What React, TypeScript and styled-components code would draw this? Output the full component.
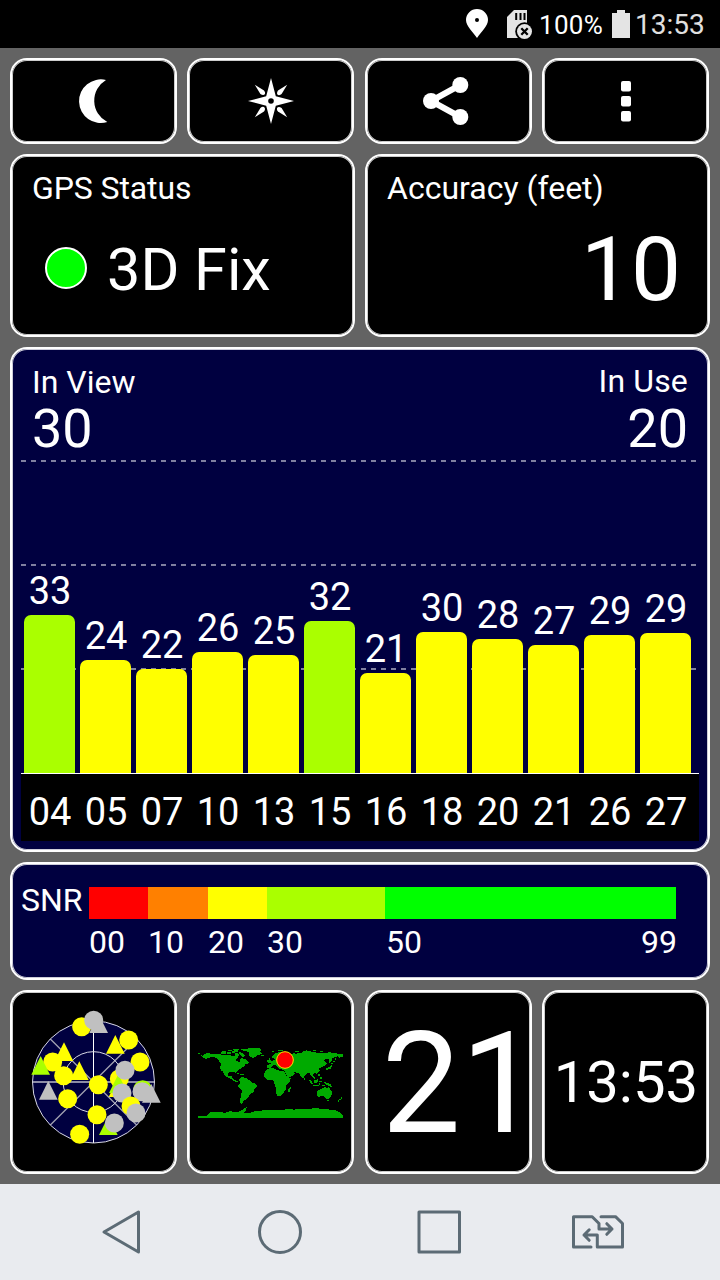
import React from "react";
import styled, { createGlobalStyle } from "styled-components";

const NAVY = "#000040";
const LIME = "#aaff00";
const YELLOW = "#ffff00";
const SILVER = "#c0c0c0";
const NAV_INK = "#5c6b75";

const GlobalStyle = createGlobalStyle`
  * { box-sizing: border-box; }
  body {
    margin: 0;
    background: #636363;
    font-family: Roboto, "Liberation Sans", sans-serif;
    color: #fff;
  }
  svg { display: block; }
`;

const Screen = styled.div`
  width: 720px;
  height: 1280px;
  display: flex;
  flex-direction: column;
  overflow: hidden;
`;

const StatusBar = styled.header`
  height: 48px;
  background: #000;
  display: flex;
  justify-content: flex-end;
  align-items: center;
  padding-right: 14px;
`;

const StatusText = styled.span<{ $size: number; $width: number; $color: string; $spacing?: number }>`
  font-size: ${(p) => p.$size}px;
  line-height: 32px;
  width: ${(p) => p.$width}px;
  color: ${(p) => p.$color};
  letter-spacing: ${(p) => p.$spacing ?? 0}px;
  padding-top: 2px;
  white-space: nowrap;
`;

const Dashboard = styled.main`
  height: 1136px;
  padding: 10px;
  display: flex;
  flex-direction: column;
  gap: 10px;
`;

const CardRow = styled.div<{ $height: number; $cell: number; $gap: number }>`
  display: grid;
  grid-auto-flow: column;
  grid-auto-columns: ${(p) => p.$cell}px;
  column-gap: ${(p) => p.$gap}px;
  height: ${(p) => p.$height}px;
`;

const Card = styled.section<{ $navy?: boolean }>`
  border: 2px solid #fff;
  border-radius: 17px;
  background: ${(p) => (p.$navy ? NAVY : "#000")};
  box-shadow: inset 0 0 0 1px rgba(255, 255, 255, 0.8);
`;

const InfoCard = styled(Card)`
  display: flex;
  flex-direction: column;
  padding: 16px 27px 0 20px;
`;

const Label = styled.div<{ $spacing?: number }>`
  font-size: 32px;
  line-height: 32px;
  letter-spacing: ${(p) => p.$spacing ?? 0}px;
  white-space: nowrap;
`;

const FixRow = styled.div`
  display: flex;
  align-items: center;
  margin-top: 36px;
  padding-left: 13px;
  gap: 20px;
  font-size: 59.4px;
  line-height: 60px;
`;

const FixLamp = styled.span`
  width: 42px;
  height: 42px;
  margin-bottom: 4px;
  border-radius: 50%;
  border: 2px solid #fff;
  background: #00ff00;
`;

const AccuracyValue = styled.div`
  font-size: 89px;
  line-height: 90px;
  margin-top: 21px;
  text-align: right;
`;

const ChartCard = styled(Card)`
  height: 505px;
  padding: 0 9px;
`;

const ChartHeader = styled.div`
  height: 111px;
  padding: 17px 10px 0 11px;
  display: flex;
  justify-content: space-between;
`;

const Count = styled.div<{ $right?: boolean }>`
  text-align: ${(p) => (p.$right ? "right" : "left")};
  margin-top: ${(p) => (p.$right ? -1 : 0)}px;
  margin-right: ${(p) => (p.$right ? 1 : 0)}px;
`;

const CountValue = styled.div<{ $offset: number }>`
  font-size: 54px;
  line-height: 54px;
  margin-top: ${(p) => p.$offset}px;
`;

const Plot = styled.div`
  display: grid;
  width: 678px;
  height: 314px;
  border-bottom: 1px solid #fff;
`;

const GridLines = styled.div`
  grid-area: 1 / 1;
  display: flex;
  flex-direction: column;
  gap: 102px;
`;

const GridLine = styled.div`
  width: 675px;
  height: 2px;
  background: repeating-linear-gradient(90deg, #8080a0 0 5px, transparent 5px 10px);
`;

const Bars = styled.div`
  grid-area: 1 / 1;
  display: flex;
  align-items: flex-end;
  gap: 5px;
  padding-left: 3px;
`;

const BarColumn = styled.div`
  width: 51px;
`;

const BarText = styled.div`
  padding-left: 1px;
  font-size: 38px;
  line-height: 38px;
  text-align: center;
`;

const Bar = styled.div<{ $height: number; $strong: boolean }>`
  height: ${(p) => p.$height}px;
  margin-top: 5px;
  border-radius: 7px 7px 0 0;
  background: ${(p) => (p.$strong ? LIME : YELLOW)};
`;

const Axis = styled.div`
  width: 678px;
  height: 67px;
  background: #000;
  display: flex;
  gap: 5px;
  padding: 19px 0 0 3px;
`;

const SnrCard = styled(Card)`
  height: 118px;
  padding: 23px 0 0 9px;
  display: flex;
`;

const SnrLabel = styled(Label)`
  width: 68px;
  margin-top: -3px;
`;

const SnrScale = styled.div`
  display: grid;
  grid-template-columns: 59px 60px 59px 118px 291px;
  grid-template-rows: 32px 32px;
  row-gap: 7px;
`;

const Segment = styled.div<{ $color: string }>`
  background: ${(p) => p.$color};
`;

const Tick = styled(Label)`
  display: flex;
  justify-content: space-between;
`;

const LastTick = styled(Tick)`
  margin: 0 -1px 0 1px;
`;

const FigureCard = styled(Card)<{ $size: number; $left: number; $top: number }>`
  display: flex;
  align-items: center;
  padding-left: ${(p) => p.$left}px;
  padding-top: ${(p) => p.$top}px;
  font-size: ${(p) => p.$size}px;
  line-height: 1.2;
  white-space: nowrap;
`;

const NavBar = styled.nav`
  height: 96px;
  background: #e9ebef;
`;

const StatusIcons = () => (
  <svg width="75" height="48" viewBox="464 0 75 48">
    <path fill="#fff" d="M477 9a11 11 0 0 0-11 11c0 6 7 12 11 18 4-6 11-12 11-18a11 11 0 0 0-11-11z" />
    <circle cx="477" cy="20" r="2" fill="#000" />
    <path fill="#e4e4e4" d="M514 10h13v28h-20V17z" />
    <path d="M516.2 13v7M520.5 13v7M524.5 13v7" stroke="#000" strokeWidth="2" />
    <circle cx="524.5" cy="31.5" r="9.3" fill="#000" />
    <circle cx="524.5" cy="31.5" r="7.5" fill="#e4e4e4" />
    <path d="M521.3 28.3l6.4 6.4M527.7 28.3l-6.4 6.4" stroke="#000" strokeWidth="2.3" />
  </svg>
);

const BatteryIcon = () => (
  <svg width="25" height="48" viewBox="610 0 25 48">
    <path fill="#e4e4e4" d="M612 13h5v-3h8v3h5v25h-18z" />
  </svg>
);

const MoonIcon = () => (
  <svg width="163" height="82" viewBox="12 60 163 82">
    <path fill="#fff" d="M106 80A21.8 21.8 0 1 0 107.3 122A24 24 0 0 1 106 80z" />
  </svg>
);

const CompassIcon = () => (
  <svg width="163" height="82" viewBox="189 60 163 82">
    <g transform="translate(271 101)" fill="#fff">
      <path d="M0-23L4.8-4.8L23 0L4.8 4.8L0 23L-4.8 4.8L-23 0L-4.8-4.8z" />
      {[0, 90, 180, 270].map((angle) => (
        <path key={angle} transform={`rotate(${angle})`} d="M-16.2-16.2L-7-10.6Q-5.4-9-6-7Q-7.6-5-10.6-7z" />
      ))}
      <circle r="2.8" fill="#000" />
    </g>
  </svg>
);

const ShareIcon = () => (
  <svg width="163" height="82" viewBox="367 60 163 82">
    <path d="M460.3 85L431 101L460.3 117" stroke="#fff" strokeWidth="6" fill="none" />
    <circle cx="460.3" cy="85" r="8" fill="#fff" />
    <circle cx="460.3" cy="117" r="8" fill="#fff" />
    <circle cx="431" cy="101" r="8" fill="#fff" />
  </svg>
);

const MoreIcon = () => (
  <svg width="163" height="82" viewBox="544 60 163 82">
    {[81, 96, 111].map((y) => (
      <rect key={y} x="621" y={y} width="10" height="10.5" rx="2" fill="#fff" />
    ))}
  </svg>
);

type Sat = ["c" | "t", number, number, string];

const SATELLITES: Sat[] = [
  ["c", 185, 80, YELLOW],
  ["t", 236, 43, SILVER],
  ["c", 221, 61, SILVER],
  ["c", 326, 120, YELLOW],
  ["t", 286, 105, YELLOW],
  ["c", 360, 186, YELLOW],
  ["c", 98, 186, YELLOW],
  ["t", 132, 127, YELLOW],
  ["t", 62, 168, LIME],
  ["t", 178, 184, YELLOW],
  ["c", 131, 227, YELLOW],
  ["t", 85, 243, SILVER],
  ["c", 143, 296, YELLOW],
  ["c", 298, 236, YELLOW],
  ["t", 294, 235, YELLOW],
  ["t", 295, 223, LIME],
  ["c", 235, 254, YELLOW],
  ["c", 231, 344, YELLOW],
  ["c", 179, 403, YELLOW],
  ["c", 315, 211, SILVER],
  ["c", 306, 279, SILVER],
  ["c", 368, 269, LIME],
  ["c", 366, 275, SILVER],
  ["t", 394, 252, SILVER],
  ["c", 333, 318, YELLOW],
  ["c", 348, 339, SILVER],
  ["t", 265, 349, LIME],
  ["c", 283, 369, SILVER],
];

const SkyView = () => (
  <svg width="163" height="180" viewBox="-24 -24 489 540">
    <circle cx="220.5" cy="246" r="183" fill={NAVY} />
    <g stroke="#a0a0b0" strokeWidth="4">
      <path d="M91 117L350 375M91 375L350 117" />
      <path d="M38 246H403" stroke="#8c8ca6" strokeWidth="6" />
      <path d="M220.5 63V429" stroke="#fff" strokeWidth="3" />
    </g>
    <g fill="none" stroke="#d8d8e4" strokeWidth="3">
      <circle cx="220.5" cy="246" r="183" />
      <circle cx="220.5" cy="246" r="91" />
    </g>
    {SATELLITES.map(([kind, x, y, color], i) =>
      kind === "c" ? (
        <circle key={i} cx={x} cy={y} r="28.5" fill={color} />
      ) : (
        <path key={i} d={`M${x} ${y}l28 56h-56z`} fill={color} />
      )
    )}
  </svg>
);

const LAND = [
  "M36 81L42 72 54 69 66 72 90 72 96 75 120 75 126 78 135 78 135 69 141 69 147 75 144 81 138 87 138 93 147 96 150 99 150 93 153 84 165 87 171 93 177 99 168 102 162 105 168 108 156 111 150 117 141 123 138 132 132 126 120 126 114 129 114 138 126 138 126 144 132 150 144 153 144 157 132 154 120 145 105 138 99 126 96 123 99 132 93 120 90 114 93 102 84 87 72 81 60 82 48 87z",
  "M24 69h7v4h-7zM33 75h4v4h-4zM93 66h15v5H93zM96 62h12v3H96zM114 60h12v3h-12zM129 56h18v4h-18zM111 66h12v7h-12zM126 64h9v6h-9zM147 66L156 68 165 78 159 81 150 75zM132 61h12v4h-12z",
  "M150 59L165 57 180 54 210 54 213 59 216 60 210 64 213 69 216 72 204 75 195 81 189 84 183 82 177 75 177 66 165 63z",
  "M213 75h10v4h-10zM141 129h7v3h-7zM150 132h13v4h-13z",
  "M147 147L156 141 168 144 177 150 183 156 198 162 201 168 192 177 192 186 183 189 177 198 171 204 165 210 159 213 159 219 153 222 150 213 153 198 156 183 147 174 144 165 150 159z",
  "M231 117L246 113 255 117 270 123 282 123 288 135 294 144 303 144 300 153 288 165 288 177 282 186 279 192 273 197 262 198 258 189 258 174 252 156 246 150 231 150 222 141 222 132z",
  "M294 177L303 171 300 186 294 186zM234 98L237 84 241 88 245 98zM231 90h4v6h-4z",
  "M231 114L231 105 243 102 240 97 252 90 258 87 252 86 246 84 246 78 258 69 270 66 285 69 300 72 312 70 318 72 324 69 333 70 336 66 348 61 357 63 372 67 399 69 432 69 450 72 459 72 459 80 447 84 444 78 438 81 426 84 426 93 417 99 417 87 408 87 402 92 411 99 408 105 396 111 387 114 390 123 381 131 372 129 369 135 375 144 372 147 363 138 360 130 351 129 345 135 339 147 333 141 330 132 321 129 309 124 315 132 306 138 295 144 288 132 285 123 276 118 270 117 261 111 255 105 249 106 243 114z",
  "M264 60h15v3h-15zM246 63h5v3h-5zM315 62h12v3h-12zM369 60h9v4h-9zM390 63h9v3h-9zM414 66h9v3h-9z",
  "M405 117L411 114 420 110 423 105 427 108 423 115 411 120zM423 99h7v4h-7zM429 93h5v4h-5zM435 84h4v6h-4z",
  "M355 147L363 152 371 162 366 163 360 156zM371 152L378 150 384 147 384 156 378 161 372 158zM369 165h18v3h-18zM387 153h9v4h-9zM387 159h4v5h-4zM384 132h5v6h-5zM389 142h7v6h-7zM402 156L411 158 423 163 426 171 411 166zM396 165h8v3h-8z",
  "M381 183L390 178 399 174 405 171 411 176 417 170 420 177 426 186 426 192 420 204 411 207 402 200 396 198 384 201 381 192zM412 210h6v3h-6zM453 201h4v6h-4zM447 207h5v4h-5zM443 211h4v4h-4zM342 145h3v5h-3z",
  "M24 264L24 258 48 258 57 252 60 247 75 246 108 248 120 244 144 246 156 240 162 234 171 231 168 240 162 249 177 249 198 243 231 240 270 240 297 237 312 239 330 236 360 238 372 234 399 237 435 240 447 246 459 258 459 264z",
];

const WorldMap = () => (
  <svg width="163" height="180" viewBox="-3 -114 489 540">
    <path d={LAND.join("")} fill="#00aa00" shapeRendering="crispEdges" />
    <circle cx="285" cy="90" r="25" fill="#ff0000" stroke="#ffe000" strokeWidth="3" />
  </svg>
);

const NavIcons = () => (
  <svg width="720" height="96" viewBox="0 1184 720 96" fill="none" stroke={NAV_INK} strokeWidth="3" strokeLinejoin="round" strokeLinecap="round">
    <path d="M104 1232L138.5 1212V1252z" />
    <circle cx="280" cy="1232" r="20.5" />
    <path d="M419 1212h40.5v40H419z" />
    <path d="M591 1247H573.5V1216.7H592.2L599 1223.5V1229H612M606.8 1223.7L612 1229L606.8 1234.3" />
    <path d="M601 1216.7H615.5L622.5 1223.5V1247H597.3V1235H584M589.2 1229.8L584 1235L589.2 1240.3" />
  </svg>
);

const BARS = [
  { id: "04", snr: 33, height: 158 },
  { id: "05", snr: 24, height: 113 },
  { id: "07", snr: 22, height: 104 },
  { id: "10", snr: 26, height: 121 },
  { id: "13", snr: 25, height: 118 },
  { id: "15", snr: 32, height: 152 },
  { id: "16", snr: 21, height: 100 },
  { id: "18", snr: 30, height: 141 },
  { id: "20", snr: 28, height: 134 },
  { id: "21", snr: 27, height: 128 },
  { id: "26", snr: 29, height: 138 },
  { id: "27", snr: 29, height: 140 },
];

export default function App() {
  return (
    <>
      <GlobalStyle />
      <Screen>
        <StatusBar>
          <StatusIcons />
          <StatusText $size={26} $width={71} $color="#fff" $spacing={0.3}>100%</StatusText>
          <BatteryIcon />
          <StatusText $size={28} $width={71} $color="#e0e0e0">13:53</StatusText>
        </StatusBar>
        <Dashboard>
          <CardRow $height={86} $cell={167} $gap={10.4}>
            <Card><MoonIcon /></Card>
            <Card><CompassIcon /></Card>
            <Card><ShareIcon /></Card>
            <Card><MoreIcon /></Card>
          </CardRow>
          <CardRow $height={183} $cell={345} $gap={10}>
            <InfoCard>
              <Label $spacing={-0.1}>GPS Status</Label>
              <FixRow><FixLamp />3D Fix</FixRow>
            </InfoCard>
            <InfoCard>
              <Label>Accuracy (feet)</Label>
              <AccuracyValue>10</AccuracyValue>
            </InfoCard>
          </CardRow>
          <ChartCard $navy>
            <ChartHeader>
              <Count>
                <Label>In View</Label>
                <CountValue $offset={4}>30</CountValue>
              </Count>
              <Count $right>
                <Label $spacing={0.15}>In Use</Label>
                <CountValue $offset={5}>20</CountValue>
              </Count>
            </ChartHeader>
            <Plot>
              <GridLines>
                <GridLine />
                <GridLine />
                <GridLine />
              </GridLines>
              <Bars>
                {BARS.map((b) => (
                  <BarColumn key={b.id}>
                    <BarText>{b.snr}</BarText>
                    <Bar $height={b.height} $strong={b.snr > 30} />
                  </BarColumn>
                ))}
              </Bars>
            </Plot>
            <Axis>
              {BARS.map((b) => (
                <BarColumn key={b.id}><BarText>{b.id}</BarText></BarColumn>
              ))}
            </Axis>
          </ChartCard>
          <SnrCard $navy>
            <SnrLabel>SNR</SnrLabel>
            <SnrScale>
              <Segment $color="#ff0000" />
              <Segment $color="#ff8000" />
              <Segment $color={YELLOW} />
              <Segment $color={LIME} />
              <Segment $color="#00ff00" />
              <Tick>00</Tick>
              <Tick>10</Tick>
              <Tick>20</Tick>
              <Tick>30</Tick>
              <LastTick><span>50</span><span>99</span></LastTick>
            </SnrScale>
          </SnrCard>
          <CardRow $height={184} $cell={167} $gap={10.4}>
            <Card><SkyView /></Card>
            <Card><WorldMap /></Card>
            <FigureCard $size={140.5} $left={15} $top={5}>21</FigureCard>
            <FigureCard $size={58} $left={9.5} $top={2}>13:53</FigureCard>
          </CardRow>
        </Dashboard>
        <NavBar><NavIcons /></NavBar>
      </Screen>
    </>
  );
}
